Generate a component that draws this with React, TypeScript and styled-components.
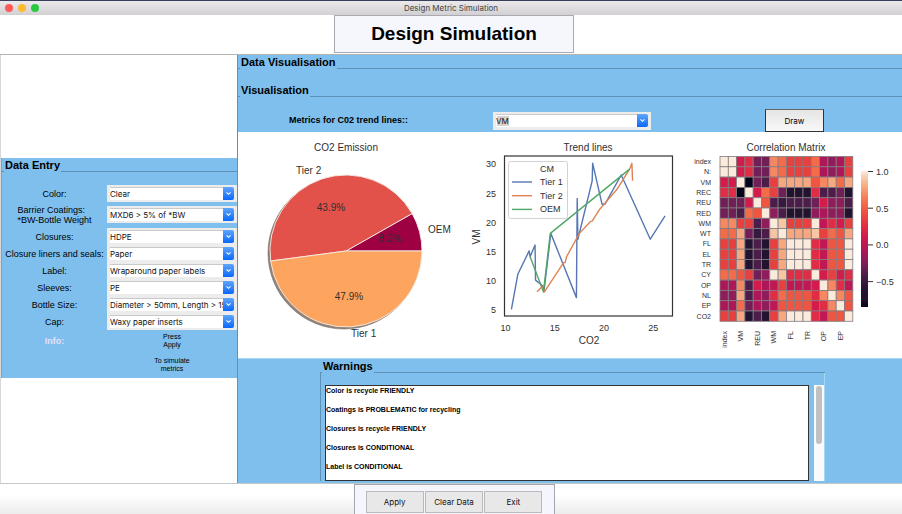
import React from "react";
import styled, { createGlobalStyle } from "styled-components";

const SKY = "#7ebfed";
const LINE = "#5c92b8";
const SANS = '"Liberation Sans", Arial, sans-serif';
const UI = 'Inter, "Liberation Sans", sans-serif';

const GlobalStyle = createGlobalStyle`
  * { box-sizing: border-box; }
  body { margin: 0; background: #fff; color: #000; font-family: ${SANS}; }
  h1, h2, p, ul { margin: 0; padding: 0; }
`;

const Window = styled.div`
  display: flex;
  flex-direction: column;
  min-height: 100vh;
  overflow: hidden;
`;

const TitleBar = styled.header`
  display: grid;
  grid-template-columns: 1fr auto 1fr;
  align-items: center;
  height: 15px;
  padding: 0 5px;
  border-top: 1px solid #39405c;
  background: linear-gradient(#ebe9eb, #d2d0d2);
  color: #444;
  font: 8px ${UI};
`;

const Lights = styled.div`
  display: flex;
  gap: 5px;
`;

const Light = styled.span<{ $color: string }>`
  width: 8px;
  height: 8px;
  border-radius: 50%;
  background: ${(p) => p.$color};
`;

const Banner = styled.div`
  display: flex;
  justify-content: center;
  height: 39px;
  padding-left: 6px;
`;

const BannerTitle = styled.h1`
  width: 240px;
  height: 38px;
  border: 1px solid #a9a9b2;
  background: #f6f6fd;
  font-size: 19px;
  line-height: 36px;
  text-align: center;
`;

const Body = styled.main`
  display: grid;
  grid-template-columns: 237px minmax(0, 1fr);
  flex: 1;
  border-top: 1px solid #b4b4b4;
  border-bottom: 1px solid #c4c8c8;
`;

const Side = styled.aside`
  padding-top: 103px;
  border-left: 1px solid #d8d8d8;
`;

const Panel = styled.section`
  background: ${SKY};
`;

const EntryPanel = styled(Panel)`
  height: 220px;
  border-left: 1px solid #72a6c9;
`;

const VisualPanel = styled(Panel)`
  display: flex;
  flex-direction: column;
  min-width: 0;
  border-left: 1px solid ${LINE};
`;

const Legend = styled.h2`
  display: flex;
  align-items: flex-end;
  gap: 1px;
  height: 14px;
  font-size: 11px;
  line-height: 14px;
  white-space: nowrap;
  &::before,
  &::after {
    content: "";
    height: 1px;
    background: ${LINE};
  }
  &::before { width: 2px; }
  &::after { flex: 1; }
`;

const SpacedLegend = styled(Legend)`
  margin-top: 14px;
`;

const Form = styled.form`
  display: grid;
  grid-template-columns: 105px minmax(0, 1fr);
  padding-top: 13px;
`;

const FieldLabel = styled.label<{ $gap?: number }>`
  display: flex;
  align-items: center;
  justify-content: center;
  height: 17px;
  margin-bottom: ${(p) => p.$gap ?? 0}px;
  font-size: 9px;
  line-height: 10px;
  white-space: pre;
`;

const Combo = styled.div<{ $gap?: number }>`
  display: flex;
  height: 17px;
  margin-bottom: ${(p) => p.$gap ?? 0}px;
  padding: 2px 3px;
  background: #ececec;
`;

const TrendCombo = styled(Combo)`
  width: 158px;
  height: 18px;
`;

const Select = styled.select`
  flex: 1;
  min-width: 0;
  height: 13px;
  padding: 1px 0 0;
  border: 0;
  border-top: 1px solid #c9c9c9;
  border-radius: 0;
  appearance: none;
  background: #fff;
  color: #111;
  font: 8px/11px ${UI};
`;

const TrendSelect = styled(Select)`
  background: linear-gradient(#d2d2d2, #d2d2d2) 1px 1px / 12px 10px no-repeat #fff;
`;

const Arrow = styled.span`
  display: flex;
  align-items: center;
  justify-content: center;
  width: 11px;
  height: 13px;
  border-radius: 0 2px 2px 0;
  background: linear-gradient(#5fa5fc, #0a68fb);
`;

const InfoLabel = styled.strong`
  padding-top: 6px;
  color: #e4e0fa;
  font-size: 9px;
  line-height: 11px;
  text-align: center;
`;

const InfoText = styled.div`
  padding-top: 3px;
  font-size: 7px;
  line-height: 8px;
  text-align: center;
  white-space: pre-line;
  p + p { margin-top: 8px; }
`;

const Controls = styled.div`
  display: grid;
  grid-template-columns: 255fr 158px 114fr 59px 78fr;
  align-items: end;
  height: 35px;
`;

const TrendLabel = styled.label`
  padding: 0 0 6px 51px;
  font-size: 9px;
  font-weight: bold;
  line-height: 11px;
`;

const TrendSlot = styled.div`
  padding-bottom: 2px;
`;

const DrawButton = styled.button`
  grid-column: 4;
  height: 23px;
  padding: 0;
  border: 1px solid #333;
  border-top-color: #666;
  background: linear-gradient(#e5e5e5, #f8f8f8);
  color: #000;
  font: 8px ${UI};
`;

const Charts = styled.div`
  display: grid;
  grid-template-columns: 222fr 225fr 217fr;
  height: 227px;
  padding-top: 1px;
  background: #fff;
  border-bottom: 1px solid #a5daf2;
`;

const Chart = styled.svg`
  width: 100%;
  height: 225px;
  font-family: ${SANS};
  fill: #303030;
`;

const WarningArea = styled.div`
  flex: 1;
  padding: 0 77px 1px 82px;
`;

const WarningBody = styled.div`
  display: flex;
  height: 108px;
  padding: 12px 0 0 4px;
  border-left: 1px solid ${LINE};
  border-right: 1px solid #a5daf2;
`;

const WarningList = styled.ul`
  flex: 1;
  border: 1px solid #333;
  background: #fff;
  font-size: 7px;
  font-weight: bold;
  line-height: 9px;
  list-style: none;
  li { margin-bottom: 10px; }
`;

const ScrollTrack = styled.div`
  width: 10px;
  margin-left: 5px;
  padding: 1px 2px;
  background: #fafafa;
`;

const ScrollThumb = styled.div`
  height: 58px;
  border-radius: 3px;
  background: #c1c1c1;
`;

const Footer = styled.footer`
  display: flex;
  justify-content: center;
  height: 30px;
  padding-left: 6px;
  background: linear-gradient(#fff 35%, #ececec);
`;

const Actions = styled.div`
  display: flex;
  gap: 1px;
  width: 201px;
  padding: 6px 11px 0;
  border: 1px solid #a5a5ae;
  border-bottom: 0;
  background: #f5f5fd;
`;

const ActionButton = styled.button`
  flex: 1;
  height: 22px;
  padding: 0;
  border: 1px solid #bababa;
  background: #e8e8e8;
  color: #111;
  font: 8px ${UI};
`;

const fields = [
  { id: "color", label: "Color:", value: "Clear", gap: 4 },
  { id: "barrier", label: "Barrier Coatings: \n*BW-Bottle Weight", value: "MXD6 > 5% of *BW", gap: 5 },
  { id: "closures", label: "Closures:", value: "HDPE" },
  { id: "liners", label: "Closure liners and seals:", value: "Paper" },
  { id: "label", label: "Label:", value: "Wraparound paper labels" },
  { id: "sleeves", label: "Sleeves:", value: "PE" },
  { id: "bottle", label: "Bottle Size:", value: "Diameter > 50mm, Length > 150mm" },
  { id: "cap", label: "Cap:", value: "Waxy paper inserts" },
];

const warnings = [
  "Color is recycle FRIENDLY",
  "Coatings is PROBLEMATIC for recycling",
  "Closures is recycle FRIENDLY",
  "Closures is CONDITIONAL",
  "Label is CONDITIONAL",
];

function Chevron() {
  return (
    <Arrow aria-hidden>
      <svg width="7" height="5" viewBox="0 0 7 5">
        <path d="M1.5 1.3 L3.5 3.3 L5.5 1.3" fill="none" stroke="#fff" strokeWidth="1.1" />
      </svg>
    </Arrow>
  );
}

const PIE = { cx: 108, cy: 118, r: 76 };

function wedge(from: number, to: number) {
  const point = (turn: number) => {
    const a = turn * 2 * Math.PI;
    return `${PIE.cx + PIE.r * Math.cos(a)} ${PIE.cy - PIE.r * Math.sin(a)}`;
  };
  return `M${PIE.cx} ${PIE.cy} L${point(from)} A${PIE.r} ${PIE.r} 0 0 0 ${point(to)} Z`;
}

function EmissionPie() {
  return (
    <Chart viewBox="0 0 222 225" role="img" aria-label="CO2 Emission">
      <text x="108" y="18" fontSize="10" textAnchor="middle">CO2 Emission</text>
      <circle cx={PIE.cx - 2} cy={PIE.cy + 2} r={PIE.r} fill="#94857b" stroke="#74665e" strokeWidth="0.6" />
      <g stroke="#f5ece6" strokeWidth="0.9">
        <path d={wedge(0, 0.082)} fill="#9e0142" />
        <path d={wedge(0.082, 0.521)} fill="#e2514a" />
        <path d={wedge(0.521, 1)} fill="#fda55e" />
      </g>
      <g fontSize="10">
        <text x="58" y="41">Tier 2</text>
        <text x="190" y="100">OEM</text>
        <text x="113" y="204">Tier 1</text>
        <g textAnchor="middle">
          <text x="93" y="78">43.9%</text>
          <text x="152" y="109">8.2%</text>
          <text x="111" y="167">47.9%</text>
        </g>
      </g>
    </Chart>
  );
}

const series = [
  {
    name: "Tier 1",
    color: "#5577b3",
    data: [[10.6, 5], [11.25, 11], [12.4, 15], [12.5, 14], [13, 16], [13.05, 10], [13.8, 9], [13.9, 8], [14.6, 18], [17.2, 7], [17.28, 24], [17.35, 17], [18.8, 27], [18.85, 30], [19.8, 23], [20.1, 23], [21.75, 28], [24.7, 17], [26.2, 21]],
  },
  {
    name: "Tier 2",
    color: "#df8355",
    data: [[13.2, 8], [13.8, 9], [13.95, 8], [15.9, 13], [16.05, 13], [16.2, 14], [17.5, 18], [18.6, 20], [18.8, 20.1], [19.5, 22], [21.3, 25.5], [22.6, 29], [22.83, 30], [22.9, 27]],
  },
  {
    name: "OEM",
    color: "#53a667",
    data: [[12.5, 14], [13.85, 8], [14.55, 18], [22.6, 29]],
  },
];

const px = (v: number) => 45.5 + (v - 10) * 9.85;
const py = (v: number) => 176.3 - (v - 5) * 5.84;

function TrendChart() {
  return (
    <Chart viewBox="0 0 225 225" role="img" aria-label="Trend lines">
      <text x="128" y="18" fontSize="10" textAnchor="middle">Trend lines</text>
      {series.map((s) => (
        <polyline
          key={s.name}
          points={s.data.map(([x, y]) => `${px(x)},${py(y)}`).join(" ")}
          fill="none"
          stroke={s.color}
          strokeWidth="1.4"
          strokeLinejoin="round"
        />
      ))}
      <rect x="44.5" y="23" width="168" height="160" fill="none" stroke="#333" strokeWidth="1.2" />
      <rect x="48.5" y="28.5" width="59" height="57" rx="2" fill="#fff" fillOpacity="0.9" stroke="#d2d2d2" />
      <g fontSize="9">
        <text x="80" y="39">CM</text>
        {series.map((s, i) => (
          <g key={s.name}>
            <path d={`M52 ${49 + i * 13.7} h20`} stroke={s.color} strokeWidth="1.4" />
            <text x="80" y={52 + i * 13.7}>{s.name}</text>
          </g>
        ))}
        {[5, 10, 15, 20, 25, 30].map((v) => (
          <text key={v} x="36" y={py(v) + 4} textAnchor="end">{v}</text>
        ))}
        {[10, 15, 20, 25].map((v) => (
          <text key={v} x={px(v)} y="198" textAnchor="middle">{v}</text>
        ))}
      </g>
      <g fontSize="10" textAnchor="middle">
        <text x="129" y="211">CO2</text>
        <text transform="translate(20 104) rotate(-90)">VM</text>
      </g>
    </Chart>
  );
}

const shades: Record<string, string> = {
  "0": "#03051a", "1": "#221331", "2": "#35193e", "3": "#4c1d4b",
  "4": "#701f57", "5": "#8f1d5b", "6": "#ad1759", "7": "#c11754",
  "8": "#d41c4c", "9": "#e02c45", A: "#e83f3f", B: "#ef5540",
  C: "#f36b48", D: "#f58860", E: "#f6a77f", F: "#f7c6a3", G: "#faebdd",
};

const matrix = [
  ["index", "GG8944DCAAAC656A"],
  ["N:", "GG8944DCAAAC656A"],
  ["VM", "88G043AEEEEBDECE"],
  ["REC", "990G8CA411193341"],
  ["REU", "4448GB3233348553"],
  ["RED", "443CBG5311156551"],
  ["WM", "DDAA35GFAAAG798A"],
  ["WT", "CCE423FGEEEFACBE"],
  ["FL", "AAE131AEGGG97BBG"],
  ["EL", "AAE131AEGGG97BBG"],
  ["TR", "AAE131AEGGG97BBG"],
  ["CY", "CCBA45GF999G8A89"],
  ["OP", "66D3867A7778GD97"],
  ["NL", "55E3659CBBB9DGDB"],
  ["EP", "66C4657BBBB89DGB"],
  ["CO2", "AAE131AEGGG97BBG"],
];

const CELL_W = 8.3;
const CELL_H = 10.3;

function CorrelationMatrix() {
  return (
    <Chart viewBox="0 0 217 225" role="img" aria-label="Correlation Matrix">
      <defs>
        <linearGradient id="scale" x1="0" y1="0" x2="0" y2="1">
          {"GFEDCBA98765432110".split("").map((c, i) => (
            <stop key={i} offset={i / 17} stopColor={shades[c]} />
          ))}
        </linearGradient>
      </defs>
      <text x="101" y="18" fontSize="10" textAnchor="middle">Correlation Matrix</text>
      {matrix.map(([name, cells], row) => (
        <g key={name}>
          <text x="26" y={31 + row * CELL_H} fontSize="7" textAnchor="end">{name}</text>
          {cells.split("").map((c, col) => (
            <rect
              key={col}
              x={35 + col * CELL_W}
              y={23.5 + row * CELL_H}
              width={CELL_W}
              height={CELL_H}
              fill={shades[c]}
              stroke="#857c80"
              strokeWidth="0.8"
            />
          ))}
        </g>
      ))}
      {matrix.map(([name], i) =>
        i % 2 === 0 ? (
          <text key={name} fontSize="7" textAnchor="end" transform={`translate(${41.5 + i * CELL_W} 198) rotate(-90)`}>
            {name}
          </text>
        ) : null
      )}
      <rect x="176" y="38" width="7" height="136" fill="url(#scale)" />
      {["1.0", "0.5", "0.0", "−0.5"].map((t, i) => (
        <g key={t}>
          <path d={`M183 ${38.5 + i * 36.7} h5`} stroke="#333" />
          <text x="191" y={42 + i * 36.7} fontSize="9">{t}</text>
        </g>
      ))}
    </Chart>
  );
}

export default function App() {
  return (
    <Window>
      <GlobalStyle />
      <TitleBar>
        <Lights>
          <Light $color="#fc5b57" />
          <Light $color="#fdbc2e" />
          <Light $color="#28c840" />
        </Lights>
        Design Metric Simulation
      </TitleBar>
      <Banner>
        <BannerTitle>Design Simulation</BannerTitle>
      </Banner>
      <Body>
        <Side>
          <EntryPanel>
            <Legend>Data Entry</Legend>
            <Form>
              {fields.map((f) => (
                <React.Fragment key={f.id}>
                  <FieldLabel htmlFor={f.id} $gap={f.gap}>{f.label}</FieldLabel>
                  <Combo $gap={f.gap}>
                    <Select id={f.id} defaultValue={f.value}>
                      <option>{f.value}</option>
                    </Select>
                    <Chevron />
                  </Combo>
                </React.Fragment>
              ))}
              <InfoLabel>Info:</InfoLabel>
              <InfoText>
                <p>{"Press\n Apply"}</p>
                <p>{"To simulate\n metrics"}</p>
              </InfoText>
            </Form>
          </EntryPanel>
        </Side>
        <VisualPanel>
          <Legend>Data Visualisation</Legend>
          <SpacedLegend>Visualisation</SpacedLegend>
          <Controls>
            <TrendLabel htmlFor="metric">Metrics for C02 trend lines::</TrendLabel>
            <TrendSlot>
              <TrendCombo>
                <TrendSelect id="metric" defaultValue="VM">
                  <option>VM</option>
                </TrendSelect>
                <Chevron />
              </TrendCombo>
            </TrendSlot>
            <DrawButton type="button">Draw</DrawButton>
          </Controls>
          <Charts>
            <EmissionPie />
            <TrendChart />
            <CorrelationMatrix />
          </Charts>
          <WarningArea>
            <Legend>Warnings</Legend>
            <WarningBody>
              <WarningList>
                {warnings.map((w) => (
                  <li key={w}>{w}</li>
                ))}
              </WarningList>
              <ScrollTrack>
                <ScrollThumb />
              </ScrollTrack>
            </WarningBody>
          </WarningArea>
        </VisualPanel>
      </Body>
      <Footer>
        <Actions>
          <ActionButton type="button">Apply</ActionButton>
          <ActionButton type="button">Clear Data</ActionButton>
          <ActionButton type="button">Exit</ActionButton>
        </Actions>
      </Footer>
    </Window>
  );
}
